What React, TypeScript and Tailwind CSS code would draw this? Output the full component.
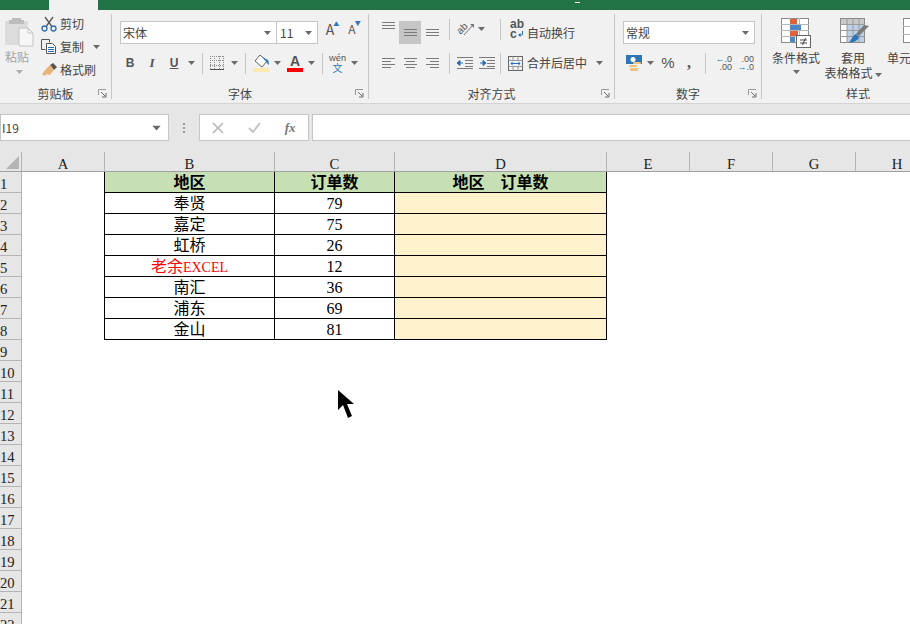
import type { ReactNode } from "react"

// ---------------------------------------------------------------------------
// Data
// ---------------------------------------------------------------------------
const rows = [
  ["奉贤", "79"],
  ["嘉定", "75"],
  ["虹桥", "26"],
  ["老余", "12"],
  ["南汇", "36"],
  ["浦东", "69"],
  ["金山", "81"],
]
const rowNumbers = Array.from({ length: 14 }, (_, i) => i + 9)

// ---------------------------------------------------------------------------
// Small ribbon pieces
// ---------------------------------------------------------------------------
function Caret({ className = "" }: { className?: string }) {
  return (
    <svg width="7" height="4" viewBox="0 0 7 4" className={className}>
      <path d="M0 0h7L3.500 4z" fill="#6a6a6a" />
    </svg>
  )
}

function Launcher() {
  return (
    <svg width="9" height="9" viewBox="0 0 9 9" fill="none">
      <path d="M.5 6V.5H8" stroke="#9a9a9a" />
      <path d="M3 3l4 4M8 4v4H4" stroke="#6a6a6a" />
    </svg>
  )
}

function Cell({ w, children }: { w: string; children?: ReactNode }) {
  return <div className={`${w} flex h-full shrink-0 items-center justify-center`}>{children}</div>
}

function Divider({ w }: { w: string }) {
  return (
    <div className={`${w} flex h-full shrink-0 items-center justify-center`}>
      <div className="h-[21px] w-px bg-[#c6c6c6]" />
    </div>
  )
}

function Group({ w, label, launcher = true, children }: { w: string; label: string; launcher?: boolean; children: ReactNode }) {
  return (
    <div className={`${w} flex h-[85px] shrink-0 flex-col border-r border-[#c6c6c6]`}>
      <div className="h-[74px]">{children}</div>
      <div className="grid h-[11px] grid-cols-[1fr_auto_1fr] items-center text-[12px] leading-[11px]">
        <span />
        <span>{label}</span>
        <span className="flex justify-end pr-[4px]">{launcher && <Launcher />}</span>
      </div>
    </div>
  )
}

function Lines({ ys, x1 = [1, 1, 1], x2 = [14, 14, 14] }: { ys: number[]; x1?: number[]; x2?: number[] }) {
  return (
    <svg width="15" height="16" viewBox="0 0 15 16" stroke="#7a7a7a">
      {ys.map((y, i) => (
        <path key={y} d={`M${x1[i % x1.length]} ${y + 0.5}H${x2[i % x2.length]}`} />
      ))}
    </svg>
  )
}

// ---------------------------------------------------------------------------
// Drawn icons
// ---------------------------------------------------------------------------
function PasteIcon() {
  return (
    <svg width="30" height="30" viewBox="0 0 30 30">
      <path d="M1 4h23v24H1z" fill="#dcdcdc" />
      <path d="M8 1h9v2h3v4H5V3h3z" fill="#bdbdbd" />
      <path d="M15 11h9l5 5v13H15z" fill="#f7f7f7" stroke="#c4c4c4" />
      <path d="M24 11v5h5" fill="none" stroke="#c4c4c4" />
    </svg>
  )
}

function ScissorsIcon() {
  return (
    <svg width="16" height="16" viewBox="0 0 16 16" fill="none">
      <path d="M4 1l6.500 9M12 1L5.500 10" stroke="#555" strokeWidth="1.300" />
      <circle cx="3.500" cy="12.500" r="2.500" stroke="#2b6cb0" strokeWidth="1.300" />
      <circle cx="12.500" cy="12.500" r="2.500" stroke="#2b6cb0" strokeWidth="1.300" />
    </svg>
  )
}

function CopyIcon() {
  return (
    <svg width="16" height="15" viewBox="0 0 16 15" fill="none" stroke="#555">
      <path d="M.5.500h8v3M.5.500v10h4" />
      <path d="M5.500 4.500h6l3 3v7h-9z" fill="#fff" />
      <path d="M7 8.500h6M7 10.500h6M7 12.500h6" stroke="#2b6cb0" />
    </svg>
  )
}

function BrushIcon() {
  return (
    <svg width="16" height="14" viewBox="0 0 16 14">
      <path d="M9 2l3-2 4 4-3 3z" fill="#555" />
      <path d="M9 2l4 5-4 5-3-1-2 2-1-1-2 0 1-2 1-2 3-3z" fill="#e5b67a" />
    </svg>
  )
}

function BordersIcon() {
  return (
    <svg width="14" height="14" viewBox="0 0 14 14" fill="none" stroke="#8a8a8a" strokeDasharray="1 1">
      <path d="M.5 0v14M4.500 0v14M9.500 0v14M13.500 0v14M0 .5h14M0 4.500h14M0 9.500h14" />
      <path d="M0 13.500h14" strokeDasharray="none" stroke="#555" />
    </svg>
  )
}

function FillIcon() {
  return (
    <svg width="17" height="18" viewBox="0 0 17 18" fill="none">
      <path d="M7 1l7 6-5 6-7-6z" fill="#fff" stroke="#666" />
      <path d="M9 3l6 3c1 2 1 4 .5 5-1-1-2-3-3-4z" fill="#2e75b6" />
      <rect x="0" y="14" width="16" height="4" fill="#ffe9b0" />
    </svg>
  )
}

function WrapIcon() {
  return (
    <svg width="14" height="13" viewBox="0 0 14 13" fill="none">
      <path d="M12.500 7v3a1 1 0 0 1-1 1H10" stroke="#2b6cb0" />
      <path d="M10.500 9l-2.500 2 2.500 2z" fill="#2b6cb0" />
    </svg>
  )
}

function MergeIcon() {
  return (
    <svg width="15" height="15" viewBox="0 0 15 15" fill="none">
      <rect x=".5" y=".5" width="14" height="14" stroke="#666" />
      <path d="M.5 4.500h14M.5 10.500h14M5 .5v4M10 .5v4M5 10.500v4M10 10.500v4" stroke="#999" />
      <path d="M3 7.500h9" stroke="#2b6cb0" />
      <path d="M4.500 5.500l-2 2 2 2zM10.500 5.500l2 2-2 2z" fill="#2b6cb0" />
    </svg>
  )
}

function OrientIcon() {
  return (
    <svg width="18" height="16" viewBox="0 0 18 16" fill="none">
      <text x="0" y="11" transform="rotate(-45 5 8)" fontSize="10" fill="#555" fontFamily="Liberation Sans">ab</text>
      <path d="M7 14L16 4" stroke="#777" />
      <path d="M13 3h4v4z" fill="#777" />
    </svg>
  )
}

function IndentIcon({ flip = false }: { flip?: boolean }) {
  return (
    <svg width="16" height="12" viewBox="0 0 16 12" fill="none">
      <path d="M0 .5h16M8 3.500h8M8 6.500h8M8 9.500h8M0 11.500h16" stroke="#7a7a7a" />
      {flip ? (
        <path d="M1 6h4M4 3.500L7 6 4 8.500z" stroke="#2b6cb0" fill="#2b6cb0" />
      ) : (
        <path d="M6 6H2M3 3.500L0 6l3 2.500z" stroke="#2b6cb0" fill="#2b6cb0" />
      )}
    </svg>
  )
}

function CurrencyIcon() {
  return (
    <svg width="16" height="17" viewBox="0 0 16 17">
      <rect x="0" y="0" width="16" height="9" fill="#2e75b6" />
      <circle cx="7" cy="4.500" r="2.500" fill="#fff" />
      <rect x="3" y="10" width="8" height="2" rx="1" fill="#efc27b" />
      <rect x="7" y="7" width="8" height="2" rx="1" fill="#efc27b" />
      <rect x="4" y="13" width="8" height="3" rx="1" fill="#efc27b" />
    </svg>
  )
}

function CondFormatIcon() {
  return (
    <svg width="30" height="30" viewBox="0 0 30 30" fill="none">
      <rect x=".5" y=".5" width="27" height="24" fill="#fff" stroke="#8a8a8a" />
      <path d="M9.500 0v25M18.500 0v25M0 6.500h28M0 12.500h28M0 18.500h28" stroke="#b5b5b5" />
      <rect x="9" y="1" width="7" height="5" fill="#e0623c" />
      <rect x="9" y="7" width="11" height="5" fill="#4d86c2" />
      <rect x="9" y="13" width="8" height="5" fill="#e0623c" />
      <rect x="9" y="19" width="5" height="5" fill="#4d86c2" />
      <rect x="15.500" y="17.500" width="14" height="12" fill="#fff" stroke="#666" />
      <path d="M19 22h7M19 25h7M24.500 20l-3 7" stroke="#444" />
    </svg>
  )
}

function TableStyleIcon() {
  return (
    <svg width="30" height="30" viewBox="0 0 30 30" fill="none">
      <rect x=".5" y=".5" width="24" height="24" fill="#fff" stroke="#8a8a8a" />
      <rect x="1" y="1" width="23" height="5" fill="#c9c9c9" />
      <rect x="7" y="6" width="17" height="18" fill="#bdd0e6" />
      <path d="M7 0v25M13 0v25M19 0v25M0 6.500h25M0 12.500h25M0 18.500h25" stroke="#9a9a9a" />
      <path d="M29 8l-10 10-3-2 8-9z" fill="#7a7a7a" />
      <path d="M16 16l3 3c-1 4-6 6-10 5 3-2 3-6 7-8z" fill="#2e75b6" />
    </svg>
  )
}

function CellStyleIcon() {
  return (
    <svg width="8" height="30" viewBox="0 0 8 30" fill="none">
      <rect x=".5" y=".5" width="16" height="24" fill="#fff" stroke="#8a8a8a" />
      <path d="M0 8.500h8M0 16.500h8" stroke="#b5b5b5" />
    </svg>
  )
}

// ---------------------------------------------------------------------------
// Ribbon groups
// ---------------------------------------------------------------------------
function ClipboardGroup() {
  return (
    <Group w="w-[112px]" label="剪贴板">
      <div className="flex h-full">
        <div className="flex w-[41px] flex-col items-start pl-[4px] pt-[3px] text-[#a3a3a3]">
          <PasteIcon />
          <span className="mt-[2px] pl-px text-[12px] leading-[16px]">粘贴</span>
          <Caret className="ml-[12px] mt-[5px] opacity-50" />
        </div>
        <div className="-mt-[2px] flex flex-col text-[12px] leading-[23px]">
          <div className="flex h-[23px] items-center gap-[3px]"><ScissorsIcon /><span>剪切</span></div>
          <div className="flex h-[23px] items-center gap-[3px]"><CopyIcon /><span>复制</span><Caret className="ml-[6px]" /></div>
          <div className="flex h-[23px] items-center gap-[3px]"><BrushIcon /><span>格式刷</span></div>
        </div>
      </div>
    </Group>
  )
}

function FontGroup() {
  return (
    <Group w="w-[257px]" label="字体">
      <div className="flex h-[30px] items-end pl-[8px]">
        <div className="flex h-[23px] w-[157px] items-center justify-between border border-[#c6c6c6] bg-white pl-[2px] pr-[5px] text-[12px]">
          <span>宋体</span><Caret />
        </div>
        <div className="flex h-[23px] w-[41px] items-center justify-between border border-l-0 border-[#c6c6c6] bg-white pl-[3px] pr-[5px] text-[12px]">
          <span>11</span><Caret />
        </div>
        <Cell w="w-[24px]">
          <span className="relative text-[14px] leading-none text-[#555]">A<span className="absolute -right-[5px] -top-[1px] text-[6px] text-[#2e75b6]">▲</span></span>
        </Cell>
        <Cell w="w-[20px]">
          <span className="relative text-[12px] leading-none text-[#555]">A<span className="absolute -right-[5px] -top-[3px] text-[6px] text-[#2e75b6]">▼</span></span>
        </Cell>
      </div>
      <div className="mt-[8px] flex h-[22px] items-center pl-[7px] text-[#555]">
        <Cell w="w-[22px]"><span className="font-['Liberation_Sans',sans-serif] text-[12px] font-bold">B</span></Cell>
        <Cell w="w-[22px]"><span className="font-['Liberation_Serif',serif] text-[13px] font-bold italic">I</span></Cell>
        <Cell w="w-[22px]"><span className="font-['Liberation_Sans',sans-serif] text-[12px] font-bold underline">U</span></Cell>
        <Cell w="w-[12px]"><Caret /></Cell>
        <Divider w="w-[10px]" />
        <Cell w="w-[19px]"><BordersIcon /></Cell>
        <div className="w-[2px]" />
        <Cell w="w-[12px]"><Caret /></Cell>
        <Divider w="w-[10px]" />
        <Cell w="w-[22px]"><FillIcon /></Cell>
        <Cell w="w-[11px]"><Caret /></Cell>
        <div className="w-px" />
        <div className="flex h-full w-[22px] flex-col items-center justify-center">
          <span className="font-['Liberation_Sans',sans-serif] text-[14px] font-bold leading-[14px]">A</span>
          <div className="h-[4px] w-[16px] bg-[#ff0000]" />
        </div>
        <Cell w="w-[11px]"><Caret /></Cell>
        <Divider w="w-[10px]" />
        <div className="flex h-full w-[21px] flex-col items-center justify-center leading-[10px]">
          <span className="text-[9px]">wén</span>
          <span className="text-[10px] text-[#2e75b6]">文</span>
        </div>
        <Cell w="w-[12px]"><Caret /></Cell>
      </div>
    </Group>
  )
}

function AlignGroup() {
  return (
    <Group w="w-[246px]" label="对齐方式">
      <div className="flex h-[30px] items-end pl-[8px]">
        <Cell w="w-[22px]"><Lines ys={[1, 4, 7]} /></Cell>
        <div className="flex h-[23px] w-[22px] items-center justify-center bg-[#c6c6c6]"><Lines ys={[4, 7, 10]} /></div>
        <Cell w="w-[22px]"><Lines ys={[8, 11, 14]} /></Cell>
        <Divider w="w-[12px]" />
        <Cell w="w-[22px]"><OrientIcon /></Cell>
        <Cell w="w-[8px]"><Caret /></Cell>
        <div className="w-[10px]" />
        <Divider w="w-[10px]" />
        <div className="w-[5px]" />
        <Cell w="w-[14px]">
          <span className="relative block h-[22px] w-[14px] pt-px font-['Liberation_Sans',sans-serif] text-[12px] font-bold leading-[10px] text-[#555]">
            ab<br />c
            <span className="absolute left-0 top-[6px]"><WrapIcon /></span>
          </span>
        </Cell>
        <span className="ml-[3px] flex h-[23px] items-center text-[12px]">自动换行</span>
      </div>
      <div className="mt-[8px] flex h-[22px] items-center pl-[8px]">
        <Cell w="w-[22px]"><Lines ys={[3, 6, 9, 12]} x2={[14, 10, 14, 10]} /></Cell>
        <Cell w="w-[22px]"><Lines ys={[3, 6, 9, 12]} x1={[1, 3, 1, 3]} x2={[14, 12, 14, 12]} /></Cell>
        <Cell w="w-[22px]"><Lines ys={[3, 6, 9, 12]} x1={[1, 5, 1, 5]} /></Cell>
        <Divider w="w-[12px]" />
        <Cell w="w-[20px]"><IndentIcon /></Cell>
        <div className="w-[2px]" />
        <Cell w="w-[20px]"><IndentIcon flip /></Cell>
        <Divider w="w-[6px]" />
        <div className="w-[5px]" />
        <MergeIcon />
        <span className="ml-[4px] text-[12px]">合并后居中</span>
        <Caret className="ml-[9px]" />
      </div>
    </Group>
  )
}

function NumberGroup() {
  return (
    <Group w="w-[147px]" label="数字">
      <div className="flex h-[30px] items-end pl-[8px]">
        <div className="flex h-[23px] w-[132px] items-center justify-between border border-[#c6c6c6] bg-white pl-[2px] pr-[5px] text-[12px]">
          <span>常规</span><Caret />
        </div>
      </div>
      <div className="mt-[8px] flex h-[22px] items-center pl-[11px] text-[#555]">
        <Cell w="w-[16px]"><CurrencyIcon /></Cell>
        <Cell w="w-[16px]"><Caret /></Cell>
        <Cell w="w-[20px]"><span className="font-['Liberation_Sans',sans-serif] text-[15px]">%</span></Cell>
        <Cell w="w-[22px]"><span className="font-['Liberation_Serif',serif] text-[16px] font-bold leading-none">,</span></Cell>
        <Divider w="w-[10px]" />
        <div className="w-[3px]" />
        <div className="flex w-[19px] flex-col items-end font-['Liberation_Sans',sans-serif] text-[9px] leading-[8px]">
          <span><span className="text-[#2e75b6]">←</span>.0</span><span>.00</span>
        </div>
        <div className="w-[3px]" />
        <div className="flex w-[19px] flex-col items-end font-['Liberation_Sans',sans-serif] text-[9px] leading-[8px]">
          <span>.00</span><span><span className="text-[#2e75b6]">→</span>.0</span>
        </div>
      </div>
    </Group>
  )
}

function StylesGroup() {
  return (
    <div className="flex h-[85px] flex-1 flex-col overflow-hidden">
      <div className="flex h-[74px] text-[12px] leading-[15px]">
        <div className="flex w-[66px] shrink-0 flex-col items-center pl-[2px] pt-[4px]">
          <CondFormatIcon />
          <span className="mt-[2px]">条件格式</span>
          <Caret className="mt-[5px]" />
        </div>
        <div className="flex w-[50px] shrink-0 flex-col items-center pt-[4px]">
          <div className="ml-[3px]"><TableStyleIcon /></div>
          <span className="mt-[2px]">套用</span>
          <span className="whitespace-nowrap">表格格式<Caret className="ml-[2px] inline align-middle" /></span>
        </div>
        <div className="flex flex-col items-start pl-[9px] pt-[4px]">
          <div className="pl-[16px]"><CellStyleIcon /></div>
          <span className="mt-[2px] whitespace-nowrap">单元</span>
        </div>
      </div>
      <div className="h-[11px] w-[192px] text-center text-[12px] leading-[11px]">样式</div>
    </div>
  )
}

// ---------------------------------------------------------------------------
// Formula bar + sheet
// ---------------------------------------------------------------------------
function FormulaBar() {
  return (
    <div className="flex h-[48px] shrink-0 items-start bg-[#e6e6e6] pt-[10px]">
      <div className="flex h-[27px] w-[169px] items-center justify-between border border-[#c6c6c6] bg-white pl-px pr-[8px] text-[12px] text-[#444]">
        <span>I19</span><Caret className="scale-125" />
      </div>
      <div className="flex h-[27px] w-[30px] items-center justify-center text-[#9a9a9a]">
        <svg width="2" height="10" viewBox="0 0 2 10" fill="#9a9a9a"><rect y="0" width="2" height="2" /><rect y="4" width="2" height="2" /><rect y="8" width="2" height="2" /></svg>
      </div>
      <div className="flex h-[27px] w-[110px] items-center border border-[#c6c6c6] bg-white">
        <div className="flex w-[37px] justify-center">
          <svg width="12" height="12" viewBox="0 0 12 12" stroke="#b4b4b4" strokeWidth="1.500"><path d="M1 1l10 10M11 1L1 11" /></svg>
        </div>
        <div className="flex w-[36px] justify-center">
          <svg width="13" height="11" viewBox="0 0 13 11" fill="none" stroke="#c4c4c4" strokeWidth="2"><path d="M1 6l4 4 7-9" /></svg>
        </div>
        <span className="w-[36px] text-center font-['Liberation_Serif',serif] text-[13px] font-bold italic leading-none text-[#777]">fx</span>
      </div>
      <div className="ml-[3px] h-[27px] flex-1 border border-r-0 border-[#c6c6c6] bg-white" />
    </div>
  )
}

function ColHead({ w, children }: { w: string; children?: ReactNode }) {
  return (
    <div className={`${w} flex h-full shrink-0 items-end justify-center border-r border-[#b4b4b4] text-[14.67px] leading-[14px] text-[#222]`}>
      {children}
    </div>
  )
}

function RowHead({ n }: { n: number }) {
  return (
    <div className="flex h-[21px] w-[22px] shrink-0 items-center overflow-hidden whitespace-nowrap border-b border-r border-[#b4b4b4] bg-[#e6e6e6] pt-[3px] text-[14.67px] leading-[18px] text-[#222]">
      {n}
    </div>
  )
}

function Sheet() {
  return (
    <div className="min-h-0 flex-1 font-['Liberation_Serif','Noto_Sans_CJK_SC',serif]">
      {/* column letters */}
      <div className="flex h-[20px] border-b border-[#a0a0a0] bg-[#e6e6e6]">
        <div className="flex h-full w-[22px] shrink-0 items-end justify-end border-r border-[#b4b4b4] pb-[2px] pr-[2px]">
          <svg width="13" height="13" viewBox="0 0 13 13"><path d="M13 0v13H0z" fill="#b4b4b4" /></svg>
        </div>
        <ColHead w="w-[83px]">A</ColHead>
        <ColHead w="w-[170px]">B</ColHead>
        <ColHead w="w-[120px]">C</ColHead>
        <ColHead w="w-[212px]">D</ColHead>
        <ColHead w="w-[83px]">E</ColHead>
        <ColHead w="w-[83px]">F</ColHead>
        <ColHead w="w-[83px]">G</ColHead>
        <ColHead w="w-[83px]">H</ColHead>
      </div>

      {/* header row */}
      <div className="flex h-[21px] text-[16px] leading-[21px] text-black">
        <RowHead n={1} />
        <div className="w-[82px]" />
        <div className="w-[171px] border-x border-b border-black bg-[#c6e0b4] text-center font-bold">地区</div>
        <div className="w-[120px] border-b border-r border-black bg-[#c6e0b4] text-center font-bold">订单数</div>
        <div className="w-[212px] border-b border-r border-black bg-[#c6e0b4] text-center font-bold">地区&nbsp;&nbsp;&nbsp;&nbsp;订单数</div>
      </div>

      {/* data rows */}
      {rows.map(([area, count], i) => (
        <div key={area} className="flex h-[21px] text-[16px] leading-[21px] text-black">
          <RowHead n={i + 2} />
          <div className="w-[82px]" />
          {area === "老余" ? (
            <div className="w-[171px] border-x border-b border-black bg-white text-center text-[#ff0000]">
              老余<span className="text-[14px]">EXCEL</span>
            </div>
          ) : (
            <div className="w-[171px] border-x border-b border-black bg-white text-center">{area}</div>
          )}
          <div className="w-[120px] border-b border-r border-black bg-white text-center">{count}</div>
          <div className="w-[212px] border-b border-r border-black bg-[#fff2cc]" />
        </div>
      ))}

      {/* empty rows */}
      {rowNumbers.map((n) => (
        <RowHead key={n} n={n} />
      ))}
    </div>
  )
}

export default function App() {
  return (
    <div className="relative flex h-[624px] w-[910px] flex-col overflow-hidden bg-white font-['Noto_Sans_CJK_SC',sans-serif] text-[#444]">
      {/* title bar */}
      <div className="flex h-[10px] shrink-0 bg-[#217346]">
        <div className="ml-[49px] h-full w-[49px] bg-[#f1f1f1]" />
        <div className="ml-[477px] h-[3px] w-[5px] border-b border-white" />
      </div>

      {/* ribbon */}
      <div className="flex h-[94px] shrink-0 border-b border-[#d4d4d4] bg-[#f1f1f1] pt-[4px]">
        <ClipboardGroup />
        <FontGroup />
        <AlignGroup />
        <NumberGroup />
        <StylesGroup />
      </div>

      <FormulaBar />
      <Sheet />

      {/* mouse pointer */}
      <svg width="20" height="30" viewBox="0 0 20 30" className="absolute left-[337px] top-[389px]">
        <path d="M1 1v20l5-5 5 13 4-2-5-12h7z" fill="#000" />
      </svg>
    </div>
  )
}
